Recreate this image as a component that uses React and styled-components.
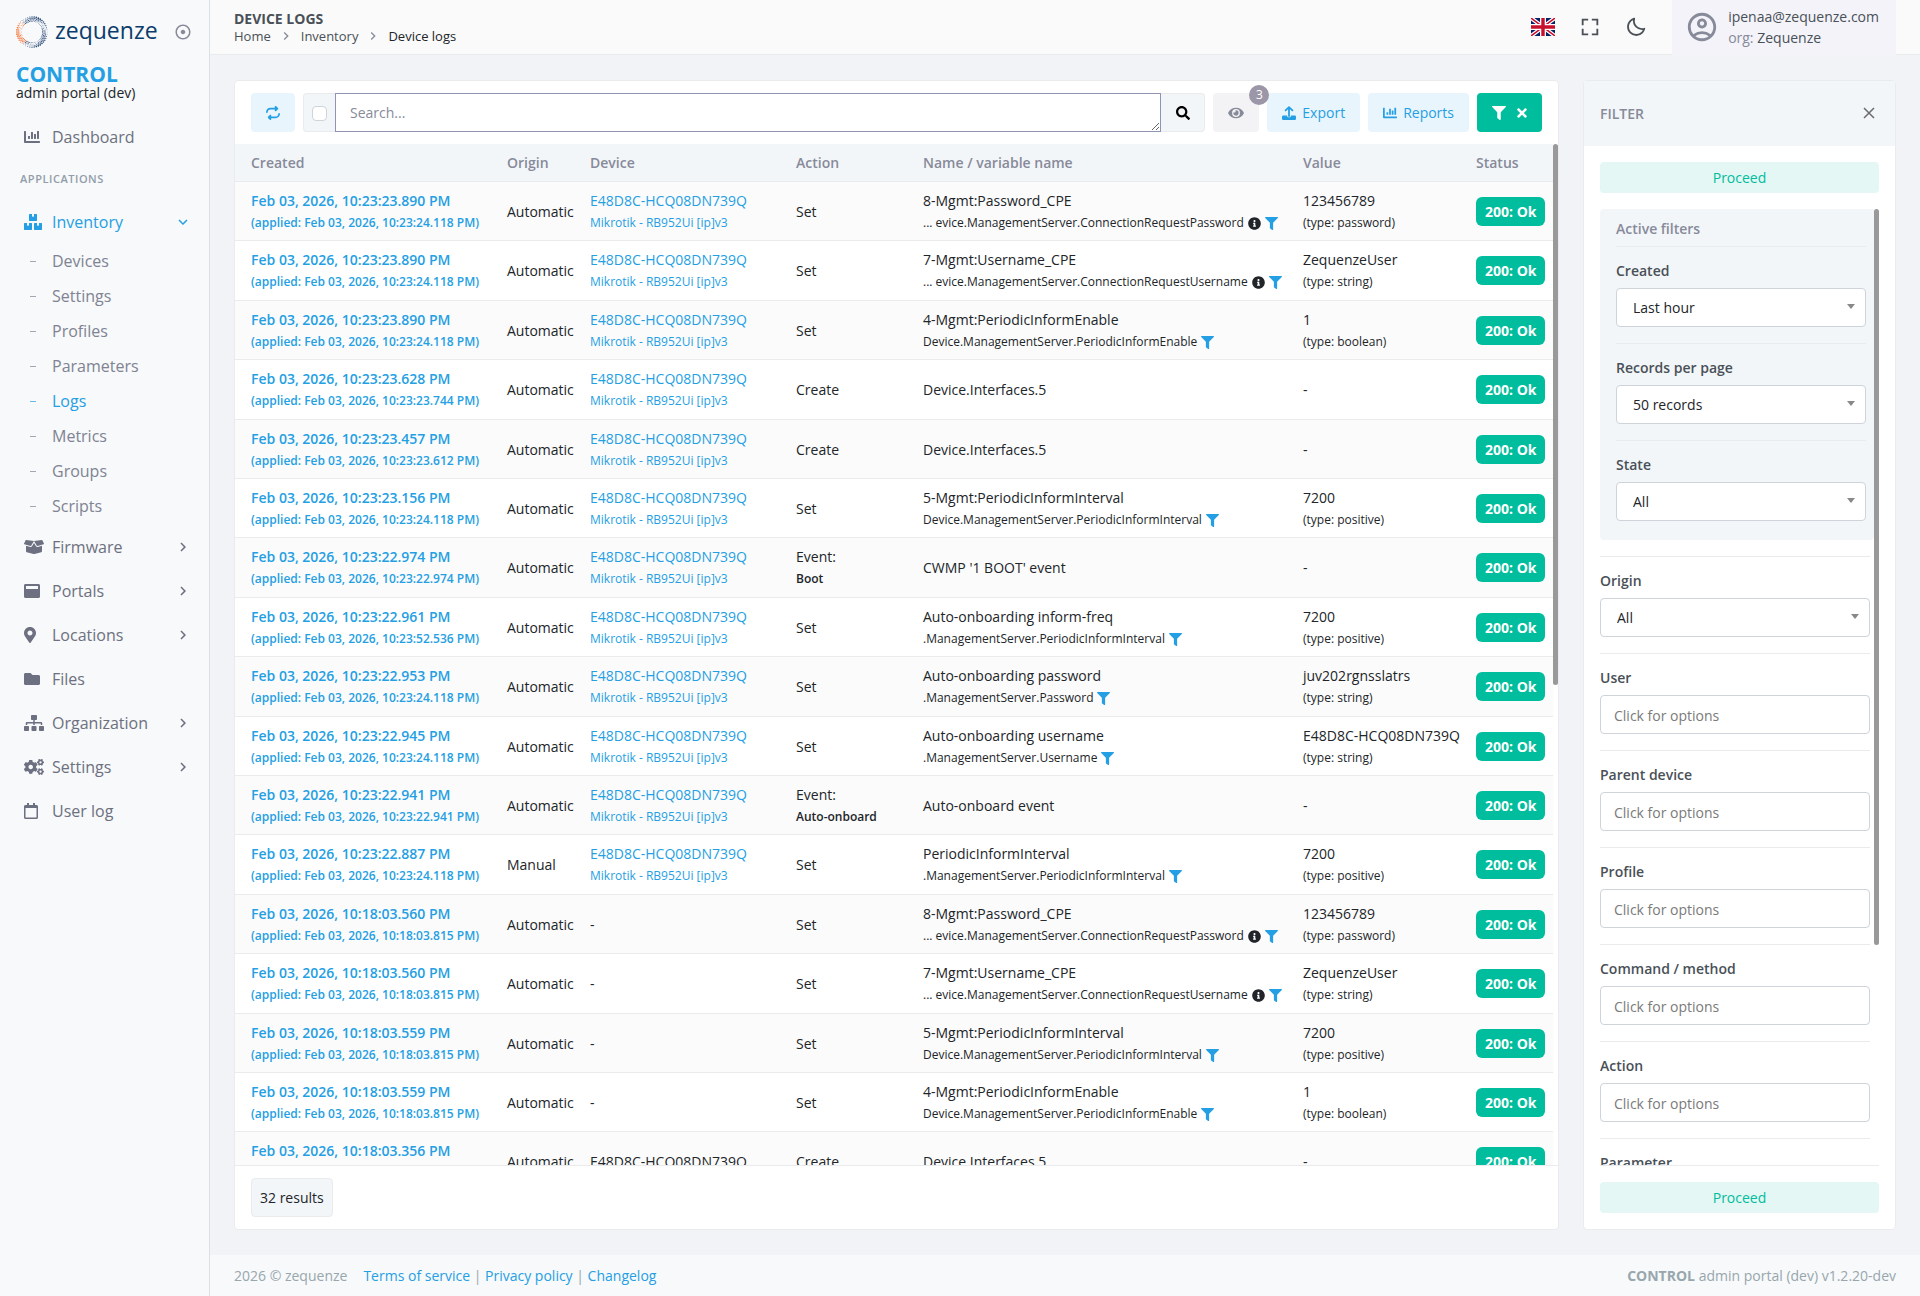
import React from "react";
import styled, { createGlobalStyle } from "styled-components";
import {
  FaChartBar, FaBoxes, FaBoxOpen, FaWindowMaximize, FaMapMarkerAlt, FaFolder,
  FaSitemap, FaCogs, FaRegCalendar, FaSearch, FaEye, FaFilter, FaTimes, FaInfoCircle,
} from "react-icons/fa";
import { FaRepeat } from "react-icons/fa6";
import { BiFullscreen, BiMoon } from "react-icons/bi";
import { MdOutlineAccountCircle, MdChevronRight, MdExpandMore } from "react-icons/md";
import { RiRecordCircleLine } from "react-icons/ri";

const color = {
  blue: "#259fe3",
  blueSoft: "#e8f5fd",
  green: "#00bd9d",
  greenSoft: "#e4f7f4",
  text: "#212529",
  label: "#495057",
  muted: "#878a99",
  nav: "#6d7080",
  line: "#e9ebec",
  panel: "#f3f6f9",
  rail: "#f7f9fa",
  page: "#f1f3f7",
};

const GlobalStyle = createGlobalStyle`
  * { box-sizing: border-box; }
  body {
    margin: 0;
    background: ${color.page};
    color: ${color.text};
    font: 400 14px/21px "Open Sans", "Noto Sans", sans-serif;
  }
  button, input, select, textarea { font: inherit; color: inherit; }
  button { cursor: pointer; }
  a { color: ${color.blue}; text-decoration: none; }
  svg { display: block; flex: none; }
`;

const Shell = styled.div`
  display: grid;
  grid-template-columns: 210px minmax(0, 1fr);
  height: 100vh;
`;

/* Sidebar */
const Sidebar = styled.aside`
  background: ${color.rail};
  border-right: 1px solid #dcdfe6;
  overflow: hidden;
`;
const BrandRow = styled.div`
  display: flex;
  align-items: center;
  height: 63px;
  padding: 0 17px 0 16px;
`;
const Wordmark = styled.span`
  flex: 1;
  margin-left: 7px;
  color: #0b3c6b;
  font-size: 23px;
  font-weight: 500;
  line-height: 30px;
  padding-bottom: 4px;
`;
const IconButton = styled.button`
  display: grid;
  place-items: center;
  padding: 0;
  border: 0;
  background: none;
  color: ${(p) => p.$tone || color.muted};
  font-size: ${(p) => p.$size || 18}px;
`;
const Product = styled.div`
  padding: 0 16px;
  margin-bottom: 15px;
`;
const ProductName = styled.div`
  color: ${color.blue};
  font-size: 21px;
  font-weight: 700;
  line-height: 22px;
`;
const ProductSub = styled.div`
  line-height: 15px;
`;
const NavLink = styled.a`
  display: flex;
  align-items: center;
  height: 44px;
  padding: 0 17px 0 24px;
  color: ${(p) => (p.$active ? color.blue : color.nav)};
  font-size: 16px;
`;
const NavIcon = styled.span`
  width: 28px;
  svg { width: 20px; height: 16px; }
`;
const NavLabel = styled.span`
  flex: 1;
`;
const NavTitle = styled.div`
  height: 41px;
  padding: 0 20px;
  color: #919da9;
  font-size: 11px;
  font-weight: 600;
  letter-spacing: 0.05em;
  line-height: 40px;
`;
const SubList = styled.div`
  margin-bottom: 1px;
`;
const SubLink = styled.a`
  display: flex;
  align-items: center;
  height: 35px;
  padding-left: 30px;
  color: ${(p) => (p.$active ? color.blue : "#7f8393")};
  font-size: 16px;
  &::before {
    content: "";
    width: 6px;
    height: 1px;
    margin-right: 16px;
    background: currentColor;
    opacity: 0.7;
  }
`;

/* Page frame */
const Page = styled.div`
  display: grid;
  grid-template-rows: 55px minmax(0, 1fr) 41px;
  min-width: 0;
  min-height: 0;
`;
const Header = styled.header`
  display: flex;
  align-items: center;
  justify-content: space-between;
  padding: 0 24px;
  background: #fafafa;
  border-bottom: 1px solid ${color.line};
`;
const PageTitle = styled.h1`
  margin: 0;
  color: ${color.label};
  font-size: 14px;
  font-weight: 700;
  line-height: 18px;
`;
const Crumbs = styled.nav`
  display: flex;
  align-items: center;
  gap: 7px;
  font-size: 13px;
  line-height: 16px;
  color: ${color.text};
  a { color: ${color.label}; }
  svg { color: ${color.muted}; }
`;
const HeaderTools = styled.div`
  display: flex;
  align-items: center;
  align-self: stretch;
  gap: 24px;
`;
const Account = styled.button`
  display: flex;
  align-items: center;
  align-self: stretch;
  gap: 9px;
  margin: 0 0 -1px 1px;
  padding: 0 16px 1px 13px;
  border: 0;
  background: #f3f3f9;
  text-align: left;
  svg { color: ${color.muted}; }
`;
const AccountText = styled.span`
  padding-right: 1px;
  color: ${color.label};
  line-height: 21px;
  small { font-size: 14px; color: ${color.muted}; }
`;
const Main = styled.main`
  display: grid;
  grid-template-columns: minmax(0, 1fr) 313px;
  gap: 24px;
  min-height: 0;
  padding: 25px 24px;
`;
const Footer = styled.footer`
  display: flex;
  align-items: center;
  justify-content: space-between;
  padding: 0 24px;
  background: ${color.rail};
  color: #98a6ad;
`;
const FooterLinks = styled.span`
  margin-left: 16px;
`;

/* Cards */
const Card = styled.section`
  display: flex;
  flex-direction: column;
  min-height: 0;
  background: #fff;
  border: 1px solid ${color.line};
  border-radius: 4px;
`;
const Toolbar = styled.form`
  display: flex;
  gap: 8px;
  padding: 12px 16px;
`;
const Button = styled.button`
  position: relative;
  display: flex;
  align-items: center;
  justify-content: center;
  gap: ${(p) => p.$gap || 6}px;
  height: 39px;
  padding: 0 15px;
  border: 0;
  border-radius: 4px;
  background: ${(p) => p.$bg || color.blueSoft};
  color: ${(p) => p.$fg || color.blue};
  svg { width: 14px; height: 14px; }
`;
const ColumnsButton = styled(Button)`
  z-index: 1;
  svg { width: 16px; }
`;
const FilterToggle = styled(Button)`
  svg:last-child { width: 10px; }
`;
const CountBadge = styled.span`
  position: absolute;
  top: -8px;
  right: -10px;
  width: 20px;
  height: 20px;
  border-radius: 10px;
  background: #9c97a8;
  color: #fff;
  font-size: 12px;
  line-height: 20px;
  text-align: center;
`;
const SearchGroup = styled.div`
  display: flex;
  flex: 1;
  min-width: 0;
  height: 39px;
`;
const SearchAddon = styled.label`
  display: grid;
  place-items: center;
  width: 32px;
  background: ${color.panel};
  border: 1px solid ${color.line};
  border-right: 0;
  border-radius: 4px 0 0 4px;
`;
const Checkbox = styled.input`
  appearance: none;
  width: 15px;
  height: 15px;
  margin: 2px 0 0;
  border: 1px solid #ced4da;
  border-radius: 4px;
  background: #fff;
`;
const SearchBox = styled.textarea`
  flex: 1;
  min-width: 0;
  height: 39px;
  padding: 8px 14px;
  border: 1px solid #8f93b4;
  outline: 0;
  resize: vertical;
  overflow: hidden;
  &::placeholder { color: ${color.muted}; opacity: 1; }
`;
const SearchButton = styled.button`
  display: grid;
  place-items: center;
  width: 44px;
  padding: 0;
  border: 1px solid ${color.line};
  border-left: 0;
  border-radius: 0 4px 4px 0;
  background: ${color.panel};
  color: #000;
`;

/* Scrolling areas keep a narrow gutter for the thumb */
const ScrollArea = styled.div`
  display: flex;
  flex: 1;
  min-height: 0;
`;
const ScrollBody = styled.div`
  flex: 1;
  min-width: 0;
  overflow: hidden;
`;
const ScrollGutter = styled.div`
  width: 5px;
  &::before {
    content: "";
    display: block;
    height: ${(p) => p.$thumb}%;
    border-radius: 3px;
    background: #999;
  }
`;

/* Log table */
const Table = styled.table`
  width: 100%;
  border-collapse: separate;
  border-spacing: 0;
  table-layout: fixed;
`;
const Col = styled.col`
  width: ${(p) => (p.$w ? `${p.$w}px` : "auto")};
`;
const Th = styled.th`
  height: 38px;
  padding: 0 8px;
  background: ${color.panel};
  border-bottom: 1px solid ${color.line};
  color: ${color.muted};
  font-weight: 600;
  text-align: left;
  &:first-child { padding-left: 16px; }
`;
const Tr = styled.tr`
  height: 59px;
  &:nth-child(odd) { background: #fbfbfb; }
  &:nth-child(5n + 2), &:nth-child(5n + 4) { height: 60px; }
`;
const Td = styled.td`
  padding: ${(p) => (p.$stacked ? 8 : 0)}px 8px 0;
  border-bottom: 1px solid ${color.line};
  vertical-align: ${(p) => (p.$stacked ? "top" : "middle")};
  white-space: nowrap;
  &:first-child { padding-left: 16px; }
`;
const Line = styled.div`
  display: flex;
  align-items: center;
  gap: 4px;
  font-size: ${(p) => (p.$small ? 12 : 14)}px;
  font-weight: ${(p) => (p.$strong ? 600 : 400)};
  line-height: ${(p) => (p.$small ? 24 : 21)}px;
`;
const CellLink = styled.a`
  display: block;
`;
const FilterLink = styled.button`
  padding: 0;
  border: 0;
  background: none;
  color: ${color.blue};
`;
const Status = styled.span`
  display: inline-block;
  padding: 4px 9px;
  border-radius: 6px;
  background: ${color.green};
  color: #fff;
  font-weight: 700;
  vertical-align: middle;
`;
const CardFooter = styled.div`
  padding: 12px 16px;
  border-top: 1px solid ${color.line};
`;
const ResultCount = styled.span`
  display: inline-flex;
  align-items: center;
  height: 39px;
  padding: 0 8px;
  border: 1px solid ${color.line};
  border-radius: 4px;
  background: ${color.panel};
  vertical-align: top;
`;

/* Filter panel */
const FilterHead = styled.div`
  display: flex;
  align-items: center;
  justify-content: space-between;
  height: 65px;
  padding: 0 20px 1px 16px;
  background: ${color.panel};
`;
const FilterTitle = styled.h2`
  margin: 0;
  color: ${color.muted};
  font-size: 14px;
  font-weight: 600;
`;
const FilterBody = styled.div`
  display: flex;
  flex: 1;
  flex-direction: column;
  min-height: 0;
  padding: 16px;
`;
const Proceed = styled.button`
  flex: none;
  height: 31px;
  padding: 0;
  border: 0;
  border-radius: 4px;
  background: ${color.greenSoft};
  color: ${color.green};
  font-weight: 500;
`;
const FilterScroll = styled(ScrollArea)`
  margin: 16px 0;
  border-bottom: 1px solid ${color.line};
`;
const ActiveBox = styled.div`
  margin-bottom: 16px;
  padding: 9px 8px 3px 16px;
  border-radius: 4px 0 4px 4px;
  background: ${color.panel};
`;
const ActiveTitle = styled.div`
  margin-bottom: 7px;
  color: ${color.muted};
  font-weight: 600;
`;
const FieldList = styled.div`
  padding-right: 4px;
`;
const Field = styled.div`
  display: flex;
  flex-direction: column;
  gap: 7px;
  padding: 13px 0 16px;
  border-top: 1px solid ${color.line};
`;
const FieldLabel = styled.label`
  color: ${color.label};
  font-weight: 600;
`;
const SelectWrap = styled.div`
  position: relative;
  &::after {
    content: "";
    position: absolute;
    top: 16px;
    right: 11px;
    border: 4px solid transparent;
    border-top: 5px solid #888;
    border-bottom: 0;
    pointer-events: none;
  }
`;
const Select = styled.select`
  appearance: none;
  display: block;
  width: 100%;
  height: 39px;
  padding: 0 16px;
  border: 1px solid #ced4da;
  border-radius: 4px;
  background: #fff;
`;
const Input = styled.input`
  display: block;
  width: 100%;
  height: 39px;
  padding: 2px 13px 0;
  border: 1px solid #ced4da;
  border-radius: 4px;
  background: #fff;
  &::placeholder { color: #7a7a7a; opacity: 1; }
`;

/* Halftone ring of the brand: orange on the left, navy elsewhere */
function RingLogo() {
  const dots = [];
  for (let ring = 0; ring < 4; ring++) {
    const count = 44;
    for (let i = 0; i < count; i++) {
      const a = (i / count) * Math.PI * 2 + ring * 0.07;
      const deg = (a * 180) / Math.PI;
      const orange = deg > 125 && deg < 225;
      const wave = Math.abs(Math.sin(a * 1.5 + ring * 0.5));
      const r = 15.2 - ring * 1.5;
      dots.push(
        <circle
          key={`${ring}-${i}`}
          cx={16 + r * Math.cos(a)}
          cy={16 + r * Math.sin(a)}
          r={0.25 + 0.6 * wave * (1 - ring * 0.15)}
          fill={orange ? "#f36f32" : "#2b4a78"}
        />
      );
    }
  }
  return <svg width="32" height="32" viewBox="0 0 32 32" aria-hidden="true">{dots}</svg>;
}

function UkFlag() {
  return (
    <svg width="24" height="18" viewBox="0 0 24 18" aria-hidden="true">
      <rect width="24" height="18" fill="#012169" />
      <path d="M0 0l24 18M24 0L0 18" stroke="#fff" strokeWidth="4" />
      <path d="M0 0l24 18M24 0L0 18" stroke="#c8102e" strokeWidth="1.5" />
      <path d="M12 0v18M0 9h24" stroke="#fff" strokeWidth="6" />
      <path d="M12 0v18M0 9h24" stroke="#c8102e" strokeWidth="3.4" />
    </svg>
  );
}

function UploadIcon() {
  return (
    <svg viewBox="0 0 14 14" aria-hidden="true">
      <path d="M7 10V1.4M3.6 4.4L7 1.2l3.400 3.200" fill="none" stroke="currentColor" strokeWidth="1.8" strokeLinecap="round" strokeLinejoin="round" />
      <path d="M1.200 9.500H5.200V10.300a1 1 0 0 0 1 1h1.600a1 1 0 0 0 1-1V9.500h4A1.200 1.200 0 0 1 14 10.700v2.100a1.200 1.200 0 0 1-1.200 1.200H1.200A1.200 1.200 0 0 1 0 12.800v-2.100A1.200 1.200 0 0 1 1.200 9.500z" fill="currentColor" />
    </svg>
  );
}

function ThinCross() {
  return (
    <svg width="12" height="12" viewBox="0 0 12 12" aria-hidden="true">
      <path d="M1 1l10 10M11 1L1 11" stroke="#6b6b6b" strokeWidth="1.500" />
    </svg>
  );
}

const subItems = ["Devices", "Settings", "Profiles", "Parameters", "Logs", "Metrics", "Groups", "Scripts"];
const navItems = [
  { label: "Firmware", icon: FaBoxOpen, more: true },
  { label: "Portals", icon: FaWindowMaximize, more: true },
  { label: "Locations", icon: FaMapMarkerAlt, more: true },
  { label: "Files", icon: FaFolder },
  { label: "Organization", icon: FaSitemap, more: true },
  { label: "Settings", icon: FaCogs, more: true },
  { label: "User log", icon: FaRegCalendar },
];

const SERIAL = "E48D8C-HCQ08DN739Q";
const MODEL = "Mikrotik - RB952Ui [ip]v3";
const PASS_PATH = "... evice.ManagementServer.ConnectionRequestPassword";
const USER_PATH = "... evice.ManagementServer.ConnectionRequestUsername";
const ENABLE_PATH = "Device.ManagementServer.PeriodicInformEnable";
const INTERVAL_PATH = "Device.ManagementServer.PeriodicInformInterval";

const logs = [
  { at: "10:23:23.890", applied: "10:23:24.118", device: "full", action: "Set", name: "8-Mgmt:Password_CPE", path: PASS_PATH, info: true, value: "123456789", type: "password" },
  { at: "10:23:23.890", applied: "10:23:24.118", device: "full", action: "Set", name: "7-Mgmt:Username_CPE", path: USER_PATH, info: true, value: "ZequenzeUser", type: "string" },
  { at: "10:23:23.890", applied: "10:23:24.118", device: "full", action: "Set", name: "4-Mgmt:PeriodicInformEnable", path: ENABLE_PATH, value: "1", type: "boolean" },
  { at: "10:23:23.628", applied: "10:23:23.744", device: "full", action: "Create", name: "Device.Interfaces.5", value: "-" },
  { at: "10:23:23.457", applied: "10:23:23.612", device: "full", action: "Create", name: "Device.Interfaces.5", value: "-" },
  { at: "10:23:23.156", applied: "10:23:24.118", device: "full", action: "Set", name: "5-Mgmt:PeriodicInformInterval", path: INTERVAL_PATH, value: "7200", type: "positive" },
  { at: "10:23:22.974", applied: "10:23:22.974", device: "full", event: "Boot", name: "CWMP '1 BOOT' event", value: "-" },
  { at: "10:23:22.961", applied: "10:23:52.536", device: "full", action: "Set", name: "Auto-onboarding inform-freq", path: ".ManagementServer.PeriodicInformInterval", value: "7200", type: "positive" },
  { at: "10:23:22.953", applied: "10:23:24.118", device: "full", action: "Set", name: "Auto-onboarding password", path: ".ManagementServer.Password", value: "juv202rgnsslatrs", type: "string" },
  { at: "10:23:22.945", applied: "10:23:24.118", device: "full", action: "Set", name: "Auto-onboarding username", path: ".ManagementServer.Username", value: SERIAL, type: "string" },
  { at: "10:23:22.941", applied: "10:23:22.941", device: "full", event: "Auto-onboard", name: "Auto-onboard event", value: "-" },
  { at: "10:23:22.887", applied: "10:23:24.118", origin: "Manual", device: "full", action: "Set", name: "PeriodicInformInterval", path: ".ManagementServer.PeriodicInformInterval", value: "7200", type: "positive" },
  { at: "10:18:03.560", applied: "10:18:03.815", action: "Set", name: "8-Mgmt:Password_CPE", path: PASS_PATH, info: true, value: "123456789", type: "password" },
  { at: "10:18:03.560", applied: "10:18:03.815", action: "Set", name: "7-Mgmt:Username_CPE", path: USER_PATH, info: true, value: "ZequenzeUser", type: "string" },
  { at: "10:18:03.559", applied: "10:18:03.815", action: "Set", name: "5-Mgmt:PeriodicInformInterval", path: INTERVAL_PATH, value: "7200", type: "positive" },
  { at: "10:18:03.559", applied: "10:18:03.815", action: "Set", name: "4-Mgmt:PeriodicInformEnable", path: ENABLE_PATH, value: "1", type: "boolean" },
  { at: "10:18:03.356", applied: "10:18:03.465", device: "serial", action: "Create", name: "Device.Interfaces.5", value: "-" },
];

function LogRow({ log }) {
  return (
    <Tr>
      <Td $stacked>
        <CellLink href="#log">
          <Line $strong>Feb 03, 2026, {log.at} PM</Line>
          <Line $strong $small>(applied: Feb 03, 2026, {log.applied} PM)</Line>
        </CellLink>
      </Td>
      <Td>{log.origin || "Automatic"}</Td>
      <Td $stacked={log.device === "full"}>
        {log.device === "full" && (
          <CellLink href="#device">
            <Line>{SERIAL}</Line>
            <Line $small>{MODEL}</Line>
          </CellLink>
        )}
        {log.device === "serial" && SERIAL}
        {!log.device && "-"}
      </Td>
      <Td $stacked={Boolean(log.event)}>
        {log.event ? (
          <>
            <Line>Event:</Line>
            <Line $strong $small>{log.event}</Line>
          </>
        ) : log.action}
      </Td>
      <Td $stacked={Boolean(log.path)}>
        <Line>{log.name}</Line>
        {log.path && (
          <Line $small>
            {log.path}
            {log.info && <FaInfoCircle size={13} />}
            <FilterLink type="button" aria-label="Filter by this variable"><FaFilter size={13} /></FilterLink>
          </Line>
        )}
      </Td>
      <Td $stacked={Boolean(log.type)}>
        <Line>{log.value}</Line>
        {log.type && <Line $small>(type: {log.type})</Line>}
      </Td>
      <Td><Status>200: Ok</Status></Td>
    </Tr>
  );
}

function NavGlyph({ icon: Icon }) {
  return (
    <NavIcon>
      <Icon preserveAspectRatio="xMinYMid meet" />
    </NavIcon>
  );
}

function SelectField({ id, label, value }) {
  return (
    <Field>
      <FieldLabel htmlFor={id}>{label}</FieldLabel>
      <SelectWrap>
        <Select id={id} defaultValue={value}>
          <option>{value}</option>
        </Select>
      </SelectWrap>
    </Field>
  );
}

function InputField({ id, label }) {
  return (
    <Field>
      <FieldLabel htmlFor={id}>{label}</FieldLabel>
      <Input id={id} placeholder="Click for options" />
    </Field>
  );
}

export default function App() {
  return (
    <>
      <GlobalStyle />
      <Shell>
        <Sidebar>
          <BrandRow>
            <RingLogo />
            <Wordmark>zequenze</Wordmark>
            <IconButton type="button" aria-label="Pin sidebar"><RiRecordCircleLine /></IconButton>
          </BrandRow>
          <Product>
            <ProductName>CONTROL</ProductName>
            <ProductSub>admin portal (dev)</ProductSub>
          </Product>
          <nav>
            <NavLink href="#dashboard">
              <NavGlyph icon={FaChartBar} />
              <NavLabel>Dashboard</NavLabel>
            </NavLink>
            <NavTitle>APPLICATIONS</NavTitle>
            <NavLink href="#inventory" $active>
              <NavGlyph icon={FaBoxes} />
              <NavLabel>Inventory</NavLabel>
              <MdExpandMore size={18} />
            </NavLink>
            <SubList>
              {subItems.map((item) => (
                <SubLink key={item} href={`#${item}`} $active={item === "Logs"}>{item}</SubLink>
              ))}
            </SubList>
            {navItems.map(({ label, icon, more }) => (
              <NavLink key={label} href={`#${label}`}>
                <NavGlyph icon={icon} />
                <NavLabel>{label}</NavLabel>
                {more && <MdChevronRight size={18} />}
              </NavLink>
            ))}
          </nav>
        </Sidebar>

        <Page>
          <Header>
            <div>
              <PageTitle>DEVICE LOGS</PageTitle>
              <Crumbs aria-label="Breadcrumb">
                <a href="#home">Home</a>
                <MdChevronRight size={16} />
                <a href="#inventory">Inventory</a>
                <MdChevronRight size={16} />
                <span>Device logs</span>
              </Crumbs>
            </div>
            <HeaderTools>
              <IconButton type="button" aria-label="Language"><UkFlag /></IconButton>
              <IconButton type="button" aria-label="Full screen" $size={22} $tone={color.label}><BiFullscreen /></IconButton>
              <IconButton type="button" aria-label="Dark mode" $size={22} $tone={color.label}><BiMoon /></IconButton>
              <Account type="button">
                <MdOutlineAccountCircle size={34} />
                <AccountText>
                  ipenaa@zequenze.com<br />
                  <small>org:</small> Zequenze
                </AccountText>
              </Account>
            </HeaderTools>
          </Header>

          <Main>
            <Card>
              <Toolbar>
                <Button type="button" aria-label="Refresh"><FaRepeat /></Button>
                <SearchGroup>
                  <SearchAddon><Checkbox type="checkbox" aria-label="Advanced search" /></SearchAddon>
                  <SearchBox aria-label="Search" placeholder="Search..." rows={1} />
                  <SearchButton type="button" aria-label="Run search"><FaSearch size={14} /></SearchButton>
                </SearchGroup>
                <ColumnsButton type="button" aria-label="Visible columns" $bg="#f3f3f5" $fg={color.muted}>
                  <FaEye />
                  <CountBadge>3</CountBadge>
                </ColumnsButton>
                <Button type="button"><UploadIcon />Export</Button>
                <Button type="button"><FaChartBar />Reports</Button>
                <FilterToggle type="button" aria-label="Clear filter" $bg={color.green} $fg="#fff" $gap={11}>
                  <FaFilter />
                  <FaTimes />
                </FilterToggle>
              </Toolbar>
              <ScrollArea>
                <ScrollBody>
                  <Table>
                    <colgroup>
                      <Col $w={264} />
                      <Col $w={83} />
                      <Col $w={206} />
                      <Col $w={127} />
                      <Col />
                      <Col $w={173} />
                      <Col $w={85} />
                    </colgroup>
                    <thead>
                      <tr>
                        {["Created", "Origin", "Device", "Action", "Name / variable name", "Value", "Status"].map((h) => (
                          <Th key={h} scope="col">{h}</Th>
                        ))}
                      </tr>
                    </thead>
                    <tbody>
                      {logs.map((log, i) => <LogRow key={i} log={log} />)}
                    </tbody>
                  </Table>
                </ScrollBody>
                <ScrollGutter $thumb={53} />
              </ScrollArea>
              <CardFooter><ResultCount>32 results</ResultCount></CardFooter>
            </Card>

            <Card>
              <FilterHead>
                <FilterTitle>FILTER</FilterTitle>
                <IconButton type="button" aria-label="Close filter"><ThinCross /></IconButton>
              </FilterHead>
              <FilterBody>
                <Proceed type="button">Proceed</Proceed>
                <FilterScroll>
                  <ScrollBody>
                    <ActiveBox>
                      <ActiveTitle>Active filters</ActiveTitle>
                      <SelectField id="f-created" label="Created" value="Last hour" />
                      <SelectField id="f-records" label="Records per page" value="50 records" />
                      <SelectField id="f-state" label="State" value="All" />
                    </ActiveBox>
                    <FieldList>
                      <SelectField id="f-origin" label="Origin" value="All" />
                      <InputField id="f-user" label="User" />
                      <InputField id="f-parent" label="Parent device" />
                      <InputField id="f-profile" label="Profile" />
                      <InputField id="f-command" label="Command / method" />
                      <InputField id="f-action" label="Action" />
                      <InputField id="f-parameter" label="Parameter" />
                    </FieldList>
                  </ScrollBody>
                  <ScrollGutter $thumb={77} />
                </FilterScroll>
                <Proceed type="button">Proceed</Proceed>
              </FilterBody>
            </Card>
          </Main>

          <Footer>
            <span>
              2026 © zequenze
              <FooterLinks>
                <a href="#terms">Terms of service</a> | <a href="#privacy">Privacy policy</a> | <a href="#changelog">Changelog</a>
              </FooterLinks>
            </span>
            <span><b>CONTROL</b> admin portal (dev) v1.2.20-dev</span>
          </Footer>
        </Page>
      </Shell>
    </>
  );
}
